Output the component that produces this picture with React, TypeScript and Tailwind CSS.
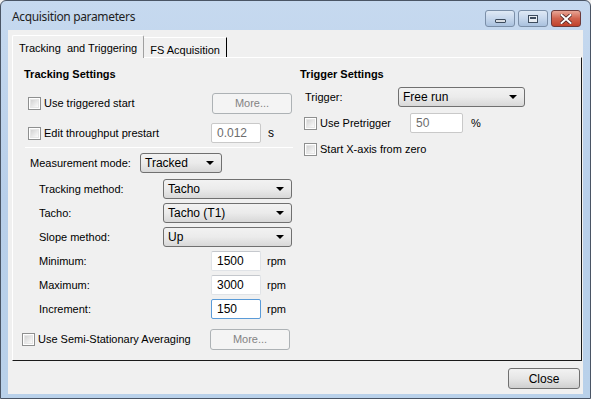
import React from "react";

function CheckBox() {
  return (
    <div className="w-[13px] h-[13px] shrink-0 border border-[#8e8f8f] bg-white p-px">
      <div className="w-full h-full border border-[#e6e6e6] bg-gradient-to-br from-[#d3d3d3] to-[#fbfbfb]" />
    </div>
  );
}

function Check({ label, className = "" }: { label: string; className?: string }) {
  return (
    <div className={`flex items-center ${className}`}>
      <CheckBox />
      <span className="ml-[3px] text-black">{label}</span>
    </div>
  );
}

function Combo({ value, width }: { value: string; width: string }) {
  return (
    <div
      className={`${width} h-[20px] shrink-0 flex items-center justify-between rounded-[3px] border border-[#707070] bg-gradient-to-b from-[#f2f2f2] via-[#ebebeb] to-[#d8d8d8] pl-[4px] pr-[7px] text-[12px] text-black`}
    >
      <span>{value}</span>
      <svg width="8" height="4" viewBox="0 0 8 4">
        <path d="M0 0 H8 L4 4 Z" fill="#000" />
      </svg>
    </div>
  );
}

function TextBox({
  value,
  width,
  gray = false,
  focused = false,
}: {
  value: string;
  width: string;
  gray?: boolean;
  focused?: boolean;
}) {
  return (
    <div
      className={`${width} h-[20px] shrink-0 flex items-center bg-white pl-[5px] text-[12px] border rounded-[2px] ${
        focused ? "border-[#5a9bd8]" : gray ? "border-[#c9c9c9]" : "border-[#e0e3e7] border-t-[#c5c8cd]"
      } ${gray ? "text-[#6d6d6d]" : "text-black"}`}
    >
      {value}
    </div>
  );
}

function MoreButton({ className = "" }: { className?: string }) {
  return (
    <div
      className={`w-[80px] h-[21px] shrink-0 flex items-center justify-center rounded-[3px] border border-[#adb2b5] bg-[#f4f4f4] text-[#838383] ${className}`}
    >
      More...
    </div>
  );
}

function CaptionButton({ kind }: { kind: "min" | "max" | "close" }) {
  if (kind === "close") {
    return (
      <div className="w-[30px] h-[17px] rounded-[3px] border border-[#6d3a3a] bg-gradient-to-b from-[#e8a596] via-[#d0634e] to-[#c0422c] flex items-center justify-center">
        <svg width="12" height="10" viewBox="0 0 12 10">
          <path
            d="M1.5 1 L10.5 9 M10.5 1 L1.5 9"
            stroke="#4a2020"
            strokeWidth="3.6"
            strokeLinecap="square"
          />
          <path
            d="M1.5 1 L10.5 9 M10.5 1 L1.5 9"
            stroke="#ffffff"
            strokeWidth="2"
            strokeLinecap="square"
          />
        </svg>
      </div>
    );
  }
  return (
    <div className="w-[30px] h-[17px] rounded-[3px] border border-[#7b8fa8] bg-gradient-to-b from-[#dfe9f5] via-[#c6d7ec] to-[#a9c1de] flex items-center justify-center">
      {kind === "min" ? (
        <div className="mt-[5px] w-[11px] h-[4px] rounded-[1px] border border-[#3d4c5e] bg-[#d8dde3]" />
      ) : (
        <div className="w-[10px] h-[8px] border border-[#3d4c5e] bg-[#e8edf3] p-[1px]">
          <div className="w-full h-full border-t-2 border-[#3d4c5e]" />
        </div>
      )}
    </div>
  );
}

export default function App() {
  return (
    <div className="w-[591px] h-[399px] overflow-hidden bg-[#f0f0f0] font-['Liberation_Sans',Arial,sans-serif] text-[11px] text-black">
      <div className="w-full h-full flex flex-col rounded-t-[6px] border border-[#4a5565] bg-gradient-to-b from-[#c6d9ef] via-[#b8cfea] to-[#b9d1ea]">
        {/* title bar */}
        <div className="h-[29px] shrink-0 flex items-start justify-between pl-[11px] pr-[9px]">
          <div className="pt-[8px] font-['Noto_Sans',sans-serif] text-[12px] leading-[16px] tracking-[-0.35px] text-[#1e1e1e]">
            Acquisition parameters
          </div>
          <div className="pt-[9px] flex gap-[3px]">
            <CaptionButton kind="min" />
            <CaptionButton kind="max" />
            <CaptionButton kind="close" />
          </div>
        </div>

        {/* client */}
        <div className="mx-[7px] h-[364px] shrink-0 bg-[#f0f0f0] flex flex-col pl-[4px]">
          {/* tabs */}
          <div className="mt-[5px] h-[22px] flex items-end">
            <div className="relative z-10 h-[23px] -mb-px px-[6px] pt-[4px] rounded-t-[2px] border-l border-t border-white border-r border-r-[#a0a0a0] bg-[#f0f0f0] whitespace-pre">
              {"Tracking  and Triggering"}
            </div>
            <div className="h-[20px] px-[6px] pt-[4px] border-t border-white border-r border-r-black">
              FS Acquisition
            </div>
          </div>

          {/* panel */}
          <div className="w-[570px] h-[304px] border-l border-t border-white border-r border-r-[#1a1a1a] border-b border-b-[#1a1a1a] flex">
            {/* left column */}
            <div className="w-[282px] pl-[11px] flex flex-col">
              <div className="mt-[10px] h-[13px] leading-[13px] font-bold">Tracking Settings</div>

              <div className="mt-[12px] h-[21px] flex items-center">
                <Check label="Use triggered start" className="ml-[4px] w-[184px]" />
                <MoreButton />
              </div>

              <div className="mt-[9px] h-[20px] flex items-center">
                <Check label="Edit throughput prestart" className="ml-[4px] w-[183px]" />
                <TextBox value="0.012" width="w-[50px]" gray />
                <span className="ml-[7px] text-[12px]">s</span>
              </div>

              <div className="mt-[4px] ml-px w-[268px] h-px bg-white" />

              <div className="mt-[5px] h-[20px] flex items-center">
                <span className="ml-[6px] w-[110px]">Measurement mode:</span>
                <Combo value="Tracked" width="w-[82px]" />
              </div>

              <div className="mt-[6px] h-[20px] flex items-center">
                <span className="ml-[15px] w-[124px]">Tracking method:</span>
                <Combo value="Tacho" width="w-[129px]" />
              </div>
              <div className="mt-[4px] h-[20px] flex items-center">
                <span className="ml-[15px] w-[124px]">Tacho:</span>
                <Combo value="Tacho (T1)" width="w-[129px]" />
              </div>
              <div className="mt-[4px] h-[20px] flex items-center">
                <span className="ml-[15px] w-[124px]">Slope method:</span>
                <Combo value="Up" width="w-[129px]" />
              </div>

              <div className="mt-[4px] h-[20px] flex items-center">
                <span className="ml-[15px] w-[172px]">Minimum:</span>
                <TextBox value="1500" width="w-[50px]" />
                <span className="ml-[6px]">rpm</span>
              </div>
              <div className="mt-[4px] h-[20px] flex items-center">
                <span className="ml-[15px] w-[172px]">Maximum:</span>
                <TextBox value="3000" width="w-[50px]" />
                <span className="ml-[6px]">rpm</span>
              </div>
              <div className="mt-[4px] h-[20px] flex items-center">
                <span className="ml-[15px] w-[172px]">Increment:</span>
                <TextBox value="150" width="w-[50px]" focused />
                <span className="ml-[6px]">rpm</span>
              </div>

              <div className="mt-[10px] h-[21px] flex items-center">
                <Check label="Use Semi-Stationary Averaging" className="-ml-[2px] w-[188px]" />
                <MoreButton />
              </div>
            </div>

            {/* right column */}
            <div className="pl-[5px] flex flex-col">
              <div className="mt-[10px] h-[13px] leading-[13px] font-bold">Trigger Settings</div>

              <div className="mt-[6px] h-[20px] flex items-center">
                <span className="ml-[5px] w-[93px]">Trigger:</span>
                <Combo value="Free run" width="w-[127px]" />
              </div>

              <div className="mt-[6px] h-[20px] flex items-center">
                <Check label="Use Pretrigger" className="ml-[4px] w-[106px]" />
                <TextBox value="50" width="w-[53px]" gray />
                <span className="ml-[8px]">%</span>
              </div>

              <div className="mt-[10px] h-[13px] flex items-center">
                <Check label="Start X-axis from zero" className="ml-[4px]" />
              </div>
            </div>
          </div>

          {/* footer */}
          <div className="mt-[7px] flex justify-end pr-[3px]">
            <div className="w-[72px] h-[21px] flex items-center justify-center rounded-[3px] border border-[#707070] bg-gradient-to-b from-[#f2f2f2] via-[#e6e6e6] to-[#cfcfcf] text-[12px]">
              Close
            </div>
          </div>
        </div>
      </div>
    </div>
  );
}
